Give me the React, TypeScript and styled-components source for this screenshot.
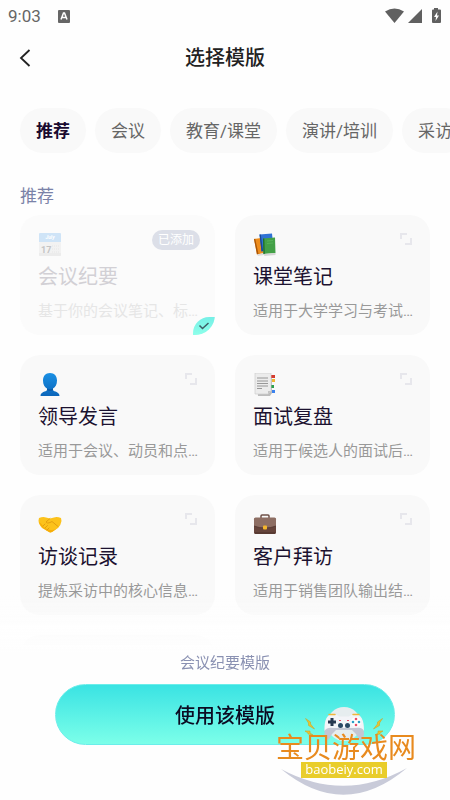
import React from "react";
import styled, { createGlobalStyle, css } from "styled-components";

const GlobalStyle = createGlobalStyle`
  * { box-sizing: border-box; }
  body {
    margin: 0;
    background: #fefefe;
    font-family: Roboto, "Noto Sans CJK SC", sans-serif;
    color: #1c1230;
  }
  button { font: inherit; color: inherit; border: 0; padding: 0; margin: 0; background: none; cursor: pointer; }
  svg { display: block; }
`;

const Screen = styled.div`
  height: 100vh;
  overflow: hidden;
  display: flex;
  flex-direction: column;
`;

const StatusBar = styled.header`
  display: flex;
  align-items: center;
  height: 32px;
  padding: 0 8px;
  color: #666;
  font-size: 17px;
  gap: 17px;
`;

const StatusIcons = styled.div`
  display: flex;
  align-items: center;
  margin-left: auto;
`;

const TitleBar = styled.nav`
  display: grid;
  grid-template-columns: 40px 1fr 40px;
  align-items: center;
  height: 52px;
  padding: 0 9px;
`;

const BackButton = styled.button`
  display: grid;
  place-items: center;
  width: 32px;
  height: 40px;
`;

const PageTitle = styled.h1`
  margin: 0;
  font-size: 20px;
  line-height: 28px;
  font-weight: 500;
  text-align: center;
  color: #222;
`;

const Tabs = styled.div`
  display: flex;
  flex: none;
  gap: 9px;
  padding: 24px 20px 0;
  overflow: hidden;
`;

const Tab = styled.button<{ $active?: boolean }>`
  flex: none;
  height: 45px;
  padding: 0 16px 2px;
  border-radius: 23px;
  background: #f9f9f9;
  font-size: 17px;
  white-space: nowrap;
  color: ${(p) => (p.$active ? "#1a0a30" : "#666")};
  font-weight: ${(p) => (p.$active ? 700 : 400)};
`;

const List = styled.main`
  flex: 1;
  min-height: 0;
  overflow: hidden;
  padding: 30px 20px 0;
`;

const SectionTitle = styled.h2`
  margin: 0 0 6px;
  font-size: 17px;
  line-height: 26px;
  font-weight: 400;
  color: #7a82a8;
`;

const Grid = styled.div`
  display: grid;
  grid-template-columns: 1fr 1fr;
  gap: 20px;
`;

const CardTop = styled.span`
  display: flex;
  justify-content: space-between;
  width: 100%;
  height: 24px;
`;

const CardTitle = styled.span`
  margin-top: 6px;
  font-size: 20px;
  line-height: 28px;
  color: #1c1230;
`;

const CardText = styled.span`
  width: 100%;
  margin-top: 10px;
  font-size: 15px;
  line-height: 20px;
  white-space: nowrap;
  color: #999;
`;

const Card = styled.button<{ $added?: boolean }>`
  position: relative;
  display: flex;
  flex-direction: column;
  min-width: 0;
  min-height: 120px;
  padding: 18px 16px 14px 18px;
  border-radius: 20px;
  background: #f9f9f9;
  overflow: hidden;
  text-align: left;
  ${(p) =>
    p.$added &&
    css`
      background: #fbfbfb;
      ${CardTitle} { color: #d2d0d5; }
      ${CardText} { color: #e6e6e6; }
    `}
`;

const AddedBadge = styled.span`
  height: 20px;
  margin: -3px -1px 0 0;
  padding: 0 6px;
  border-radius: 10px;
  background: #dcdfe8;
  color: #fff;
  font-size: 12px;
  line-height: 20px;
`;

const SelectedMark = styled.span`
  position: absolute;
  right: 0;
  bottom: 0;
  display: grid;
  place-items: center;
  width: 22px;
  height: 18px;
  border-radius: 18px 0 20px 0;
  background: linear-gradient(#75efe6, #8effea);
`;

const ExpandIcon = styled.svg`
  margin-right: 2px;
`;

const Footer = styled.footer`
  position: fixed;
  left: 0;
  right: 0;
  bottom: 0;
  padding: 58px 55px 55px;
  display: flex;
  flex-direction: column;
  background: linear-gradient(rgba(254, 254, 254, 0), #fefefe 58px);
`;

const Caption = styled.p`
  margin: 0 0 11px;
  font-size: 15px;
  line-height: 20px;
  text-align: center;
  color: #8a91b2;
`;

const UseButton = styled.button`
  height: 61px;
  padding-bottom: 1px;
  border-radius: 31px;
  border: 1px solid #6beeea;
  background: linear-gradient(#3ae3e3, #7cffe9);
  font-size: 20px;
  font-weight: 500;
  color: #0b0b22;
`;

const Watermark = styled.div`
  position: fixed;
  right: 34px;
  bottom: 4px;
  width: 140px;
  height: 92px;
  padding-top: 32px;
  display: flex;
  flex-direction: column;
  align-items: center;
  pointer-events: none;
`;

const WatermarkArt = styled.svg`
  position: absolute;
  left: 0;
  top: 0;
`;

const WatermarkName = styled.span`
  position: relative;
  z-index: 1;
  font-size: 28px;
  line-height: 26px;
  color: #e88a1e;
  white-space: nowrap;
`;

const WatermarkSite = styled.span`
  position: relative;
  width: 86px;
  height: 16px;
  margin-right: 4px;
  background: #e9cd2b;
  color: #fff;
  font-family: "Open Sans", sans-serif;
  font-size: 13px;
  font-weight: 500;
  line-height: 15px;
  text-align: center;
`;

const Calendar = () => (
  <svg width="24" height="24" viewBox="0 0 24 24" aria-hidden="true">
    <rect x="1" y="9" width="22" height="14" rx="1" fill="#f2f2f2" />
    <path d="M1 20h22v2q0 1-1 1H2q-1 0-1-1z" fill="#ececec" />
    <path d="M2 0h20q1 0 1 1v8H1V1q0-1 1-1z" fill="#cfe4f7" />
    <text x="12" y="6" textAnchor="middle" fontSize="5" fontStyle="italic" fontWeight="700" fill="#fff">July</text>
    <text x="3" y="20" fontSize="9" fontWeight="700" fill="#c4c4c4">17</text>
    <path d="M14 13h7M14 16h7M14 19h7" stroke="#e6e6e6" strokeDasharray="1 1" />
  </svg>
);

const Books = () => (
  <svg width="24" height="24" viewBox="0 0 24 24" aria-hidden="true">
    <path d="M1 6l7-1 3 15-7 1.500z" fill="#ee8d1c" />
    <path d="M1 6l1.200-.2L5.500 21 4 21.500z" fill="#a95508" />
    <path d="M4 21.500l7-1.500v2l-6 1z" fill="#ddd" />
    <path d="M6.500 1.500L19 .5l1.500 15-12 3z" fill="#2f72d4" />
    <path d="M6.500 1.500h1.300L10 18l-1.500.5z" fill="#1a4894" />
    <path d="M10 5.500L22 4.500l.5 15.500-12 1z" fill="#43a047" />
    <path d="M10 5.500h1.300l.5 15.500h-1.300z" fill="#1f6e2c" />
    <path d="M10.500 21l12-1v2l-11 1z" fill="#d5d5d5" />
    <path d="M14 8l6-.5M14 10.500l6-.5" stroke="#5dba60" strokeWidth=".7" />
  </svg>
);

const Person = () => (
  <svg width="24" height="24" viewBox="0 0 24 24" aria-hidden="true">
    <defs>
      <linearGradient id="personFill" x1="0" y1="0" x2="0" y2="1">
        <stop offset="0" stopColor="#1a90e4" />
        <stop offset="1" stopColor="#0b66ba" />
      </linearGradient>
    </defs>
    <path d="M12 0c4.500 0 7 3 7 7.500 0 4-1.500 6.500-4 8v1.500c1 2 6.500 1.500 6.500 6H2.500c0-4.500 5.500-4 6.500-6v-1.500c-2.500-1.500-4-4-4-8C5 3 7.500 0 12 0z" fill="url(#personFill)" />
    <path d="M9 15.500q3 1.500 6 0v1.500q-3 2-6 0z" fill="#0a5ca9" />
  </svg>
);

const Notes = () => (
  <svg width="24" height="24" viewBox="0 0 24 24" aria-hidden="true">
    <path d="M4 2h15v18l-2 3H5z" fill="#bdbdbd" />
    <path d="M18 2h4v3h-4z" fill="#d43c30" />
    <path d="M19 6h3v3h-3z" fill="#f2b632" />
    <path d="M18 12h3v3h-3z" fill="#2f9e4f" />
    <path d="M19 17h3v3h-3z" fill="#3c82ee" />
    <path d="M2 0h16v18l-3 3H2z" fill="#ececec" stroke="#cfcfcf" strokeWidth=".7" />
    <path d="M4 5h11M4 8h11M4 10.500h11M4 13h11M4 15.500h5" stroke="#8f8f8f" strokeWidth=".9" />
    <path d="M15 21v-3h3z" fill="#c4c4c4" />
  </svg>
);

const Handshake = () => (
  <svg width="24" height="24" viewBox="0 0 24 24" aria-hidden="true">
    <path d="M1 5q4-1.500 7-.5l4 1 4-1q3-1 7 .5l.500 3q-.5 4-3.500 7l-6 4q-2 .8-3 0L4 15Q.5 11 .5 7.500z" fill="#fcc21b" />
    <path d="M1 9q1 3.500 4 6l6 4q1 .8 3 0l5-3.500q-4 2-6 1.500-6-1-8-4T1 9z" fill="#f7ae0a" />
    <path d="M12 5.500L8 9q1.500 2 4 .5l2-1 6 5M5 13l2-2M7 15l2.500-2.500M9 17l2-2" fill="none" stroke="#dc960c" strokeWidth=".8" strokeLinecap="round" />
  </svg>
);

const Briefcase = () => (
  <svg width="24" height="24" viewBox="0 0 24 24" aria-hidden="true">
    <path d="M8 5V3q0-1 1-1h6q1 0 1 1v2" fill="none" stroke="#6f5148" strokeWidth="1.500" />
    <rect x="1" y="5" width="22" height="16" rx="1.500" fill="#65443b" />
    <path d="M2.500 4.500h19q1.500 0 1.500 1.500v7q-5 2-11 2T1 13V6q0-1.500 1.500-1.500z" fill="#8d6e63" />
    <path d="M1 13q5 2 11 2t11-2" fill="none" stroke="#4e342e" strokeWidth=".7" />
    <rect x="10" y="12.500" width="4" height="4" rx="1" fill="#f4b62c" />
    <path d="M2 20h20" stroke="#4c312a" />
  </svg>
);

const Expand = () => (
  <ExpandIcon width="12" height="12" viewBox="0 0 12 12" aria-hidden="true">
    <path d="M1 6V1h6M11 5v6H5" fill="none" stroke="#e7e7ec" strokeWidth="2" />
  </ExpandIcon>
);

const tabs = ["推荐", "会议", "教育/课堂", "演讲/培训", "采访"];

const templates = [
  { title: "会议纪要", text: "基于你的会议笔记、标…", Icon: Calendar, added: true },
  { title: "课堂笔记", text: "适用于大学学习与考试…", Icon: Books },
  { title: "领导发言", text: "适用于会议、动员和点…", Icon: Person },
  { title: "面试复盘", text: "适用于候选人的面试后…", Icon: Notes },
  { title: "访谈记录", text: "提炼采访中的核心信息…", Icon: Handshake },
  { title: "客户拜访", text: "适用于销售团队输出结…", Icon: Briefcase },
];

export default function App() {
  return (
    <Screen>
      <GlobalStyle />
      <StatusBar>
        <span>9:03</span>
        <svg width="12" height="13" viewBox="0 0 12 13" aria-hidden="true">
          <rect width="12" height="13" rx="1" fill="#666" />
          <path d="M3 9.500L5.500 3h1L9 9.500M4 7.500h4" fill="none" stroke="#fff" strokeWidth="1.500" />
        </svg>
        <StatusIcons>
          <svg width="58" height="18" viewBox="0 0 58 18" aria-hidden="true" fill="#606060">
            <path d="M1 4.500Q10.500-1.500 20 4.500L10.500 16z" />
            <path d="M38 2v14H24z" />
            <path d="M50 1h4v1.500h2q1 0 1 1V15q0 1-1 1h-7q-1 0-1-1V3.500q0-1 1-1h1z" />
            <path d="M53.500 4.500L50 10h2l-.5 4 3.500-5.500h-2z" fill="#fff" />
          </svg>
        </StatusIcons>
      </StatusBar>
      <TitleBar>
        <BackButton aria-label="返回">
          <svg width="12" height="20" viewBox="0 0 12 20" aria-hidden="true">
            <path d="M10.500 2L2 10l8.500 8" fill="none" stroke="#222" strokeWidth="1.800" />
          </svg>
        </BackButton>
        <PageTitle>选择模版</PageTitle>
      </TitleBar>
      <Tabs>
        {tabs.map((label, i) => (
          <Tab key={label} $active={i === 0}>{label}</Tab>
        ))}
      </Tabs>
      <List>
        <SectionTitle>推荐</SectionTitle>
        <Grid>
          {templates.map(({ title, text, Icon, added }) => (
            <Card key={title} $added={added}>
              <CardTop>
                <Icon />
                {added ? <AddedBadge>已添加</AddedBadge> : <Expand />}
              </CardTop>
              <CardTitle>{title}</CardTitle>
              <CardText>{text}</CardText>
              {added && (
                <SelectedMark>
                  <svg width="12" height="10" viewBox="0 0 12 10" aria-hidden="true">
                    <path d="M1.500 4.500l3 3L10.500 2" fill="none" stroke="#3d5c66" strokeWidth="1.500" />
                  </svg>
                </SelectedMark>
              )}
            </Card>
          ))}
          <Card aria-label="更多模版" />
        </Grid>
      </List>
      <Footer>
        <Caption>会议纪要模版</Caption>
        <UseButton>使用该模版</UseButton>
      </Footer>
      <Watermark>
        <WatermarkArt width="140" height="92" viewBox="0 0 140 92" aria-hidden="true">
          <path d="M5 65Q68 117 131 64Q68 99 5 65z" fill="#c9cbd9" />
          <circle cx="68" cy="20" r="17" fill="#e6edef" />
          <path d="M49 19L48.500 30Q49 38 53 35Q56 29 60 26H76Q80 29 83 35Q87 38 88 30L87 19z" fill="#c3c6d4" />
          <path d="M48.500 27Q48 10 57 10Q61 10 63 12.500H73Q75 10 79 10Q88 10 88 27Q86 23 80 24H57Q51 23 48.500 27z" fill="#f3f4f8" />
          <path d="M53 10.500h6M77 10.500h6" stroke="#efb63c" strokeWidth="1.500" strokeLinecap="round" />
          <path d="M56 14v8M52 18h8" stroke="#273850" strokeWidth="3" />
          <circle cx="80" cy="18" r="5" fill="#fff" />
          <circle cx="80" cy="15" r="1.300" fill="#e94d68" />
          <circle cx="80" cy="21" r="1.300" fill="#e94d68" />
          <circle cx="77" cy="18" r="1.300" fill="#2a9dc7" />
          <circle cx="83" cy="18" r="1.300" fill="#2a9dc7" />
          <circle cx="64.500" cy="21.500" r="2.500" fill="#2a4865" />
          <circle cx="71.500" cy="21.500" r="2.500" fill="#2a4865" />
          <path d="M63 16.500h2M71 16.500h2" stroke="#e94d68" strokeWidth="1.200" />
          <g fill="#e8c62c" stroke="#c9a52c" strokeWidth=".6">
            <path d="M29.500 14.500l5 3.500 0 2 4 5-6-3.500v-2.500z" />
            <path d="M29 27l5 0 0 2 3 2-5-1v-1z" />
            <path d="M106.500 14.500l-5 3.500 0 2-4 5 6-3.500v-2.500z" />
            <path d="M107 27l-5 0 0 2-3 2 5-1v-1z" />
          </g>
        </WatermarkArt>
        <WatermarkName>宝贝游戏网</WatermarkName>
        <WatermarkSite>baobeiy.com</WatermarkSite>
      </Watermark>
    </Screen>
  );
}
